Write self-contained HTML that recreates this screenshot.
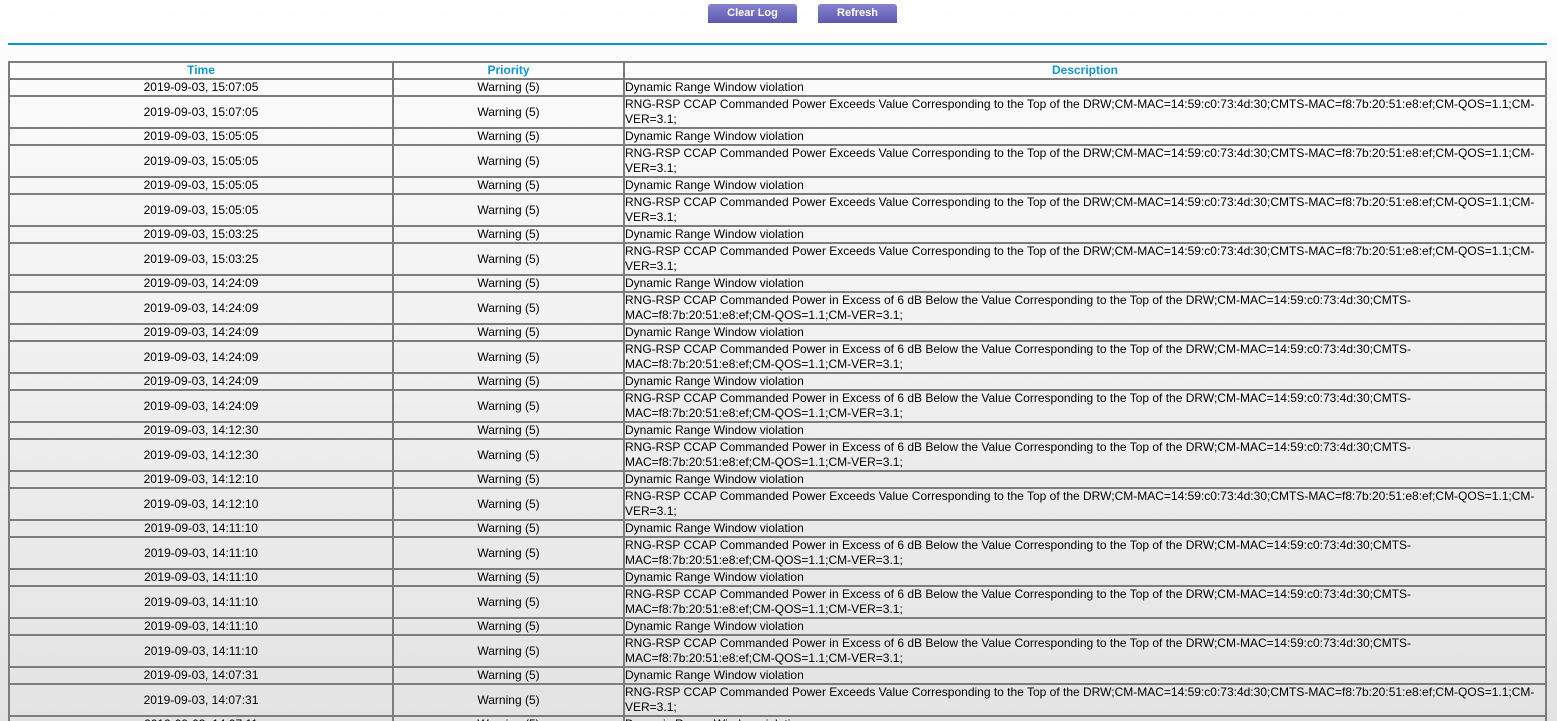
<!DOCTYPE html>
<html><head><meta charset="utf-8"><style>
html,body{margin:0;padding:0;width:1557px;height:721px;overflow:hidden;}
body{background:linear-gradient(#ffffff 0px,#f6f6f6 200px,#e3e3e3 721px);font-family:"Liberation Sans",Arial,sans-serif;font-size:12px;color:#000;position:relative;}
.btn{position:absolute;top:4px;height:19px;border-radius:3px 3px 0 0;background:linear-gradient(#8782d2,#5f59ad);color:#fff;font-weight:bold;font-size:11px;line-height:19px;text-align:center;}
.line{position:absolute;left:8px;width:1539px;top:43px;height:2px;background:#0a97c8;}
table{position:absolute;left:8px;top:61px;width:1539px;border-collapse:collapse;}
td,th{border:2px solid #7d7d7d;padding:0;line-height:15px;vertical-align:middle;}
th{color:#1796cc;font-weight:bold;font-size:12px;height:15px;}
td.c{text-align:center;}
</style></head><body>
<div class="btn" style="left:708px;width:89px">Clear Log</div>
<div class="btn" style="left:818px;width:79px">Refresh</div>
<div class="line"></div>
<table>
<colgroup><col style="width:384px"><col style="width:231px"><col></colgroup>
<tr><th>Time</th><th>Priority</th><th>Description</th></tr>
<tbody id="b"></tbody>
</table>
<script>
var A="RNG-RSP CCAP Commanded Power Exceeds Value Corresponding to the Top of the DRW;CM-MAC=14:59:c0:73:4d:30;CMTS-MAC=f8:7b:20:51:e8:ef;CM-QOS=1.1;CM-<br>VER=3.1;";
var B="RNG-RSP CCAP Commanded Power in Excess of 6 dB Below the Value Corresponding to the Top of the DRW;CM-MAC=14:59:c0:73:4d:30;CMTS-<br>MAC=f8:7b:20:51:e8:ef;CM-QOS=1.1;CM-VER=3.1;";
var rows=[["15:07:05",A],["15:05:05",A],["15:05:05",A],["15:03:25",A],["14:24:09",B],["14:24:09",B],["14:24:09",B],["14:12:30",B],["14:12:10",A],["14:11:10",B],["14:11:10",B],["14:11:10",B],["14:07:31",A],["14:07:11",A]];
var h="";
rows.forEach(function(r){
h+='<tr><td class="c">2019-09-03, '+r[0]+'</td><td class="c">Warning (5)</td><td>Dynamic Range Window violation</td></tr>';
h+='<tr><td class="c">2019-09-03, '+r[0]+'</td><td class="c">Warning (5)</td><td>'+r[1]+'</td></tr>';
});
document.getElementById("b").innerHTML=h;
</script>
</body></html>
